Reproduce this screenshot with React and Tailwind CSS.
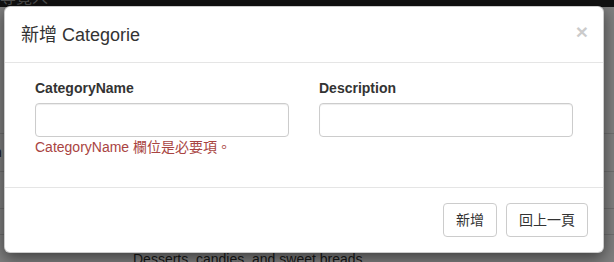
import React from "react";

const font = { fontFamily: '"Liberation Sans", Arial, "Noto Sans CJK TC", sans-serif' };

function PageBehind() {
    return (
        <div className="flex flex-col">
            <div className="h-[7px] overflow-hidden bg-[#222]">
                <div className="-mt-[11px] pl-0 text-[16px] leading-[18px] text-[#9d9d9d]">導覽人</div>
            </div>
            <div className="h-[126px]" />
            <div className="flex h-[38px] items-center border-t border-[#ddd] text-[14px] text-[#333]">
                <span className="-ml-[6px]">n</span>
            </div>
            <div className="h-[37px] border-t border-[#ddd]" />
            <div className="h-[26px] border-t border-[#ddd]" />
            <div className="border-t border-[#ddd] pl-[133px] pt-[14px] text-[14px] leading-[20px] text-[#333]">
                Desserts, candies, and sweet breads
            </div>
        </div>
    );
}

function CategoryModal() {
    return (
        <div className="absolute left-[4px] top-[6px] w-[600px] rounded-[6px] border border-black/20 bg-white shadow-[0_5px_15px_rgba(0,0,0,0.5)]">
            <div className="flex items-start justify-between border-b border-[#e5e5e5] px-[15px] pb-[14px] pt-[15px]">
                <h4 className="pl-[1px] text-[18px] leading-[26px] text-[#333]">新增 Categorie</h4>
                <button className="-mt-[1px] text-[21px] font-bold leading-[21px] text-black opacity-20">×</button>
            </div>
            <div className="flex gap-[30px] pb-[15px] pl-[30px] pt-[15px]">
                <div className="flex w-[254px] flex-col">
                    <label className="mb-[5px] text-[14px] font-bold leading-[20px] text-[#333]">CategoryName</label>
                    <input className="h-[34px] rounded-[4px] border border-[#ccc] shadow-[inset_0_1px_1px_rgba(0,0,0,0.075)]" />
                    <span className="mb-[15px] text-[14px] leading-[20px] text-[#a94442]">CategoryName 欄位是必要項。</span>
                </div>
                <div className="flex w-[254px] flex-col">
                    <label className="mb-[5px] text-[14px] font-bold leading-[20px] text-[#333]">Description</label>
                    <input className="h-[34px] rounded-[4px] border border-[#ccc] shadow-[inset_0_1px_1px_rgba(0,0,0,0.075)]" />
                </div>
            </div>
            <div className="flex justify-end gap-[9px] border-t border-[#e5e5e5] p-[15px]">
                <button className="h-[34px] w-[54px] rounded-[4px] border border-[#ccc] bg-white text-[14px] text-[#333]">新增</button>
                <button className="h-[34px] w-[82px] rounded-[4px] border border-[#ccc] bg-white text-[14px] text-[#333]">回上一頁</button>
            </div>
        </div>
    );
}

export default function App() {
    return (
        <div className="relative h-[262px] w-[614px] overflow-hidden bg-white" style={font}>
            <PageBehind />
            <div className="absolute inset-0 bg-black/50" />
            <CategoryModal />
        </div>
    );
}
